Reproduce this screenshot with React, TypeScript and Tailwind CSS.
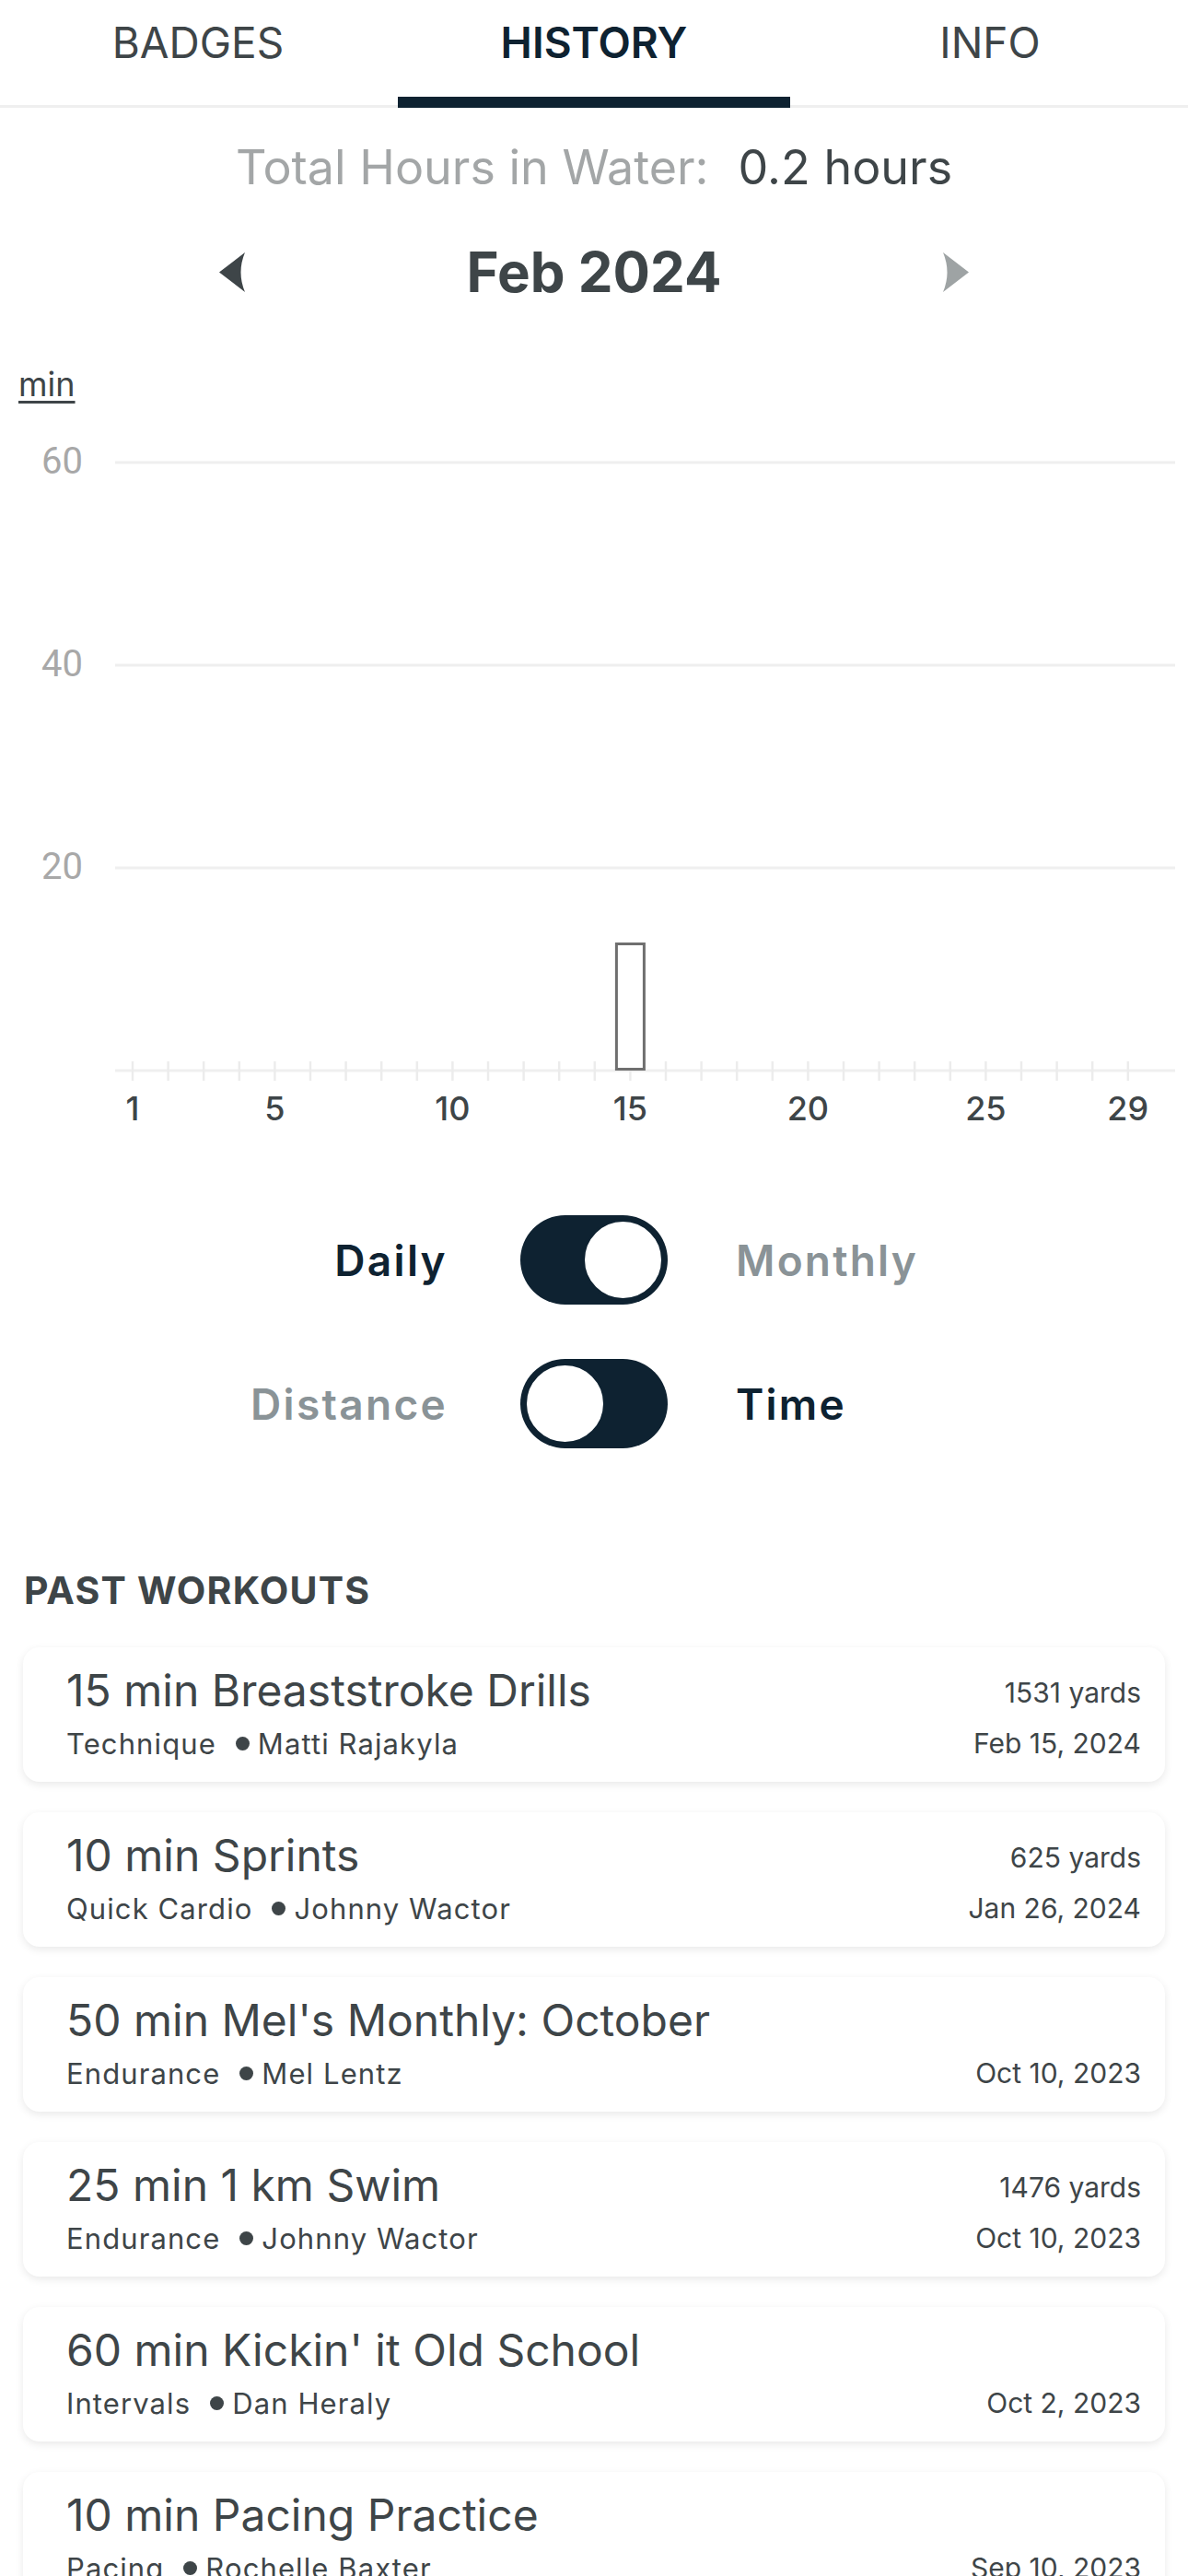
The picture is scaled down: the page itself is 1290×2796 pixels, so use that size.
import React from "react";

const workouts = [
  { title: "15 min Breaststroke Drills", dist: "1531 yards", cat: "Technique", coach: "Matti Rajakyla", date: "Feb 15, 2024" },
  { title: "10 min Sprints", dist: "625 yards", cat: "Quick Cardio", coach: "Johnny Wactor", date: "Jan 26, 2024" },
  { title: "50 min Mel's Monthly: October", dist: "", cat: "Endurance", coach: "Mel Lentz", date: "Oct 10, 2023" },
  { title: "25 min 1 km Swim", dist: "1476 yards", cat: "Endurance", coach: "Johnny Wactor", date: "Oct 10, 2023" },
  { title: "60 min Kickin' it Old School", dist: "", cat: "Intervals", coach: "Dan Heraly", date: "Oct 2, 2023" },
  { title: "10 min Pacing Practice", dist: "", cat: "Pacing", coach: "Rochelle Baxter", date: "Sep 10, 2023" },
];

function Tabs() {
  const tabs = ["BADGES", "HISTORY", "INFO"];
  return (
    <div className="flex border-b-[3px] border-[#efefef]">
      {tabs.map((t) => {
        const active = t === "HISTORY";
        return (
          <div key={t} className="relative flex-1 h-[114px] flex items-start justify-center pt-[23px]">
            <span
              className={
                "text-[46px] leading-none " +
                (active ? "font-semibold text-[#0e2231]" : "font-normal text-[#3e4548]")
              }
            >
              {t}
            </span>
            {active && <div className="absolute left-[2px] right-[2px] bottom-[-3px] h-[12px] bg-[#0e2231]" />}
          </div>
        );
      })}
    </div>
  );
}

function Arrow({ dir, color }: { dir: "left" | "right"; color: string }) {
  return (
    <svg width="28" height="43" viewBox="0 0 28 43" className={dir === "right" ? "scale-x-[-1]" : ""}>
      <path d="M28 0 L0 21.5 L28 43 Q19 21.5 28 0 Z" fill={color} />
    </svg>
  );
}

function Chart() {
  const x0 = 144;
  const step = 38.6;
  const days = Array.from({ length: 29 }, (_, i) => i + 1);
  const labels = [1, 5, 10, 15, 20, 25, 29];
  const grid = [
    { v: 60, y: 62 },
    { v: 40, y: 282 },
    { v: 20, y: 502 },
  ];
  const base = 722;
  const bx = x0 + 14 * step;
  return (
    <svg width="1290" height="800" viewBox="0 0 1290 800" className="block">
      {grid.map((g) => (
        <g key={g.v}>
          <line x1="125" x2="1276" y1={g.y} y2={g.y} stroke="#efefef" strokeWidth="3" />
          <text
            x="90"
            y={g.y + 12}
            textAnchor="end"
            fill="#a8a8a8"
            fontSize="40"
            fontFamily="Roboto, 'Liberation Sans', sans-serif"
          >
            {g.v}
          </text>
        </g>
      ))}
      <line x1="125" x2="1276" y1={base} y2={base} stroke="#efefef" strokeWidth="3" />
      {days.map((d) => {
        const x = x0 + (d - 1) * step;
        return <line key={d} x1={x} x2={x} y1={712} y2={733} stroke="#ececec" strokeWidth="2.5" />;
      })}
      <rect x={bx - 15} y={584.5} width="30" height={136} fill="#ffffff" stroke="#6f6f6f" strokeWidth="3" />
      {labels.map((d) => (
        <text
          key={d}
          x={x0 + (d - 1) * step}
          y={776}
          textAnchor="middle"
          fill="#3e4548"
          fontSize="36"
          fontWeight="500"
          fontFamily="Inter, sans-serif"
        >
          {d}
        </text>
      ))}
    </svg>
  );
}

function Toggle({ on }: { on: boolean }) {
  return (
    <div className={"w-[160px] h-[97px] rounded-full bg-[#0e2231] p-[4px] flex " + (on ? "justify-end" : "justify-start")}>
      <div className="w-[89px] h-[89px] rounded-full bg-white border-[3px] border-[#0e2231]" />
    </div>
  );
}

function ToggleRow({ left, right, on }: { left: string; right: string; on: boolean }) {
  return (
    <div className="grid grid-cols-[1fr_160px_1fr] items-center h-[97px]">
      <div
        className={
          "text-right pr-[79px] text-[46px] leading-none font-semibold tracking-[2.3px] " +
          (on ? "text-[#0e2231]" : "text-[#8a9397]")
        }
      >
        {left}
      </div>
      <Toggle on={on} />
      <div
        className={
          "pl-[74px] text-[46px] leading-none font-semibold tracking-[2.2px] " +
          (on ? "text-[#8a9397]" : "text-[#0e2231]")
        }
      >
        {right}
      </div>
    </div>
  );
}

function Card({ w }: { w: (typeof workouts)[number] }) {
  return (
    <div className="mx-[25px] h-[146px] rounded-[18px] bg-white shadow-[0_3px_10px_rgba(0,0,0,0.09)] pl-[47px] pr-[26px] pt-[23px] text-[#3e4548]">
      <div className="flex justify-between items-center h-[48px]">
        <span className="text-[48px] leading-none font-normal">{w.title}</span>
        {w.dist && <span className="text-[30px] leading-none pt-[4px]">{w.dist}</span>}
      </div>
      <div className="flex justify-between items-center h-[30px] mt-[18px] text-[30px] leading-none">
        <span className="flex items-center tracking-[1.1px] text-[31px]">
          {w.cat}
          <span className="inline-block w-[15px] h-[15px] rounded-full bg-[#3e4548] ml-[21px] mr-[9px]" />
          {w.coach}
        </span>
        <span>{w.date}</span>
      </div>
    </div>
  );
}

export default function App() {
  return (
    <div className="w-[1290px] bg-white font-['Inter',sans-serif]">
      <Tabs />
      <div className="h-[129px] flex items-center justify-center gap-[32px] text-[52px] leading-none">
        <span className="text-[#a3a6a7]">Total Hours in Water:</span>
        <span className="text-[#3e4548]">0.2 hours</span>
      </div>
      <div className="h-[98px] w-[814px] mx-auto flex items-center justify-between">
        <Arrow dir="left" color="#3e4548" />
        <span className="text-[60px] leading-none font-bold text-[#3e4548]">Feb 2024</span>
        <Arrow dir="right" color="#9ea3a4" />
      </div>
      <div className="mt-[55px] pl-[20px] h-[36px] text-[36px] leading-none text-[#3e4548]">
        <span className="underline decoration-[3px] underline-offset-[5px]">min</span>
      </div>
      <div className="mt-[5px]">
        <Chart />
      </div>
      <div className="mt-[79px] flex flex-col gap-[59px]">
        <ToggleRow left="Daily" right="Monthly" on={true} />
        <ToggleRow left="Distance" right="Time" on={false} />
      </div>
      <div className="mt-[134px] pl-[26px] text-[41px] leading-none font-bold tracking-[1.2px] text-[#3e4548]">
        PAST WORKOUTS
      </div>
      <div className="mt-[41px] flex flex-col gap-[33px] pb-[40px]">
        {workouts.map((w) => (
          <Card key={w.title} w={w} />
        ))}
      </div>
    </div>
  );
}
